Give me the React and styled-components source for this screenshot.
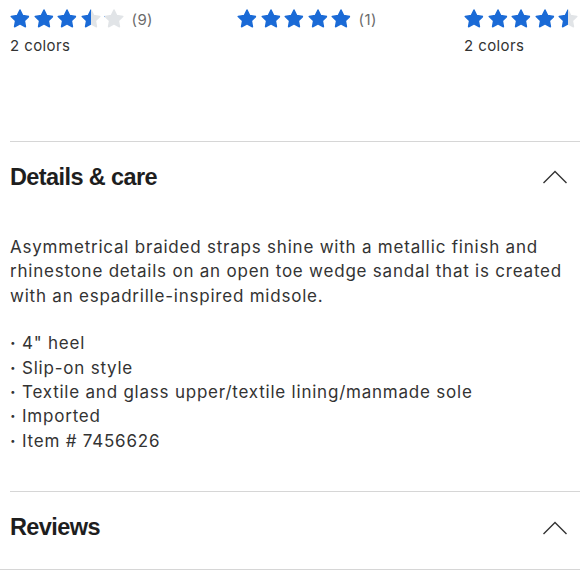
import React from 'react';
import styled, { createGlobalStyle } from 'styled-components';

const Global = createGlobalStyle`
    html, body {
        margin: 0;
        padding: 0;
        background: #fff;
        overflow: hidden;
    }
    body {
        font-family: "Inter", "Liberation Sans", sans-serif;
        color: #333;
    }
`

const Page = styled.div`
    width: 580px;
    height: 580px;
    overflow: hidden;
`

const Products = styled.div`
    display: grid;
    grid-template-columns: repeat(3, 227px);
    padding: 8px 0 0 9px;
    height: 133px;
`

const Product = styled.div`
    display: flex;
    flex-direction: column;
    gap: 6px;
`

const RatingRow = styled.div`
    display: flex;
    align-items: center;
    gap: 1.5px;
    height: 22px;
`

const Count = styled.span`
    font-size: 15px;
    color: #6b6b6b;
    margin-left: 5px;
    letter-spacing: 0.4px;
`

const Colors = styled.div`
    font-size: 15px;
    letter-spacing: 0.4px;
    color: #333;
    padding-left: 1px;
`

const Section = styled.section`
    border-top: 1px solid #d6d6d6;
    margin-left: 10px;
`

const Header = styled.div`
    display: flex;
    align-items: center;
    justify-content: space-between;
    height: ${p => p.$tall ? 71 : 70}px;
    padding-right: 12px;
    padding-bottom: ${p => p.$tall ? 6 : 0}px;
`

const Title = styled.h2`
    margin: 0;
    font-family: "Liberation Sans", Arial, sans-serif;
    font-weight: 700;
    font-size: 23.5px;
    letter-spacing: -0.6px;
    color: #1e1e1e;
`

const Body = styled.div`
    padding: 23px 0 38px;
    font-size: 17px;
    line-height: 24.4px;
    letter-spacing: 0.78px;
    color: #333;
`

const Paragraph = styled.p`
    margin: 0 0 23px;
`

const List = styled.ul`
    list-style: none;
    margin: 0;
    padding: 0;
`

const Item = styled.li`
    &::before {
        content: "·";
        display: inline-block;
        width: 12px;
        font-weight: 700;
    }
`

const BottomRule = styled.div`
    border-top: 1px solid #d6d6d6;
`

const STAR = "M12 2.2l2.95 6.05 6.65.95-4.82 4.65 1.15 6.6L12 17.3l-5.93 3.15 1.15-6.6L2.4 9.2l6.65-.95z";

function Star({ fill, id }) {
    const pct = Math.round(fill * 100);
    return (
        <svg width="22" height="22" viewBox="0 0 24 24">
            <defs>
                <linearGradient id={id}>
                    <stop offset={`${pct}%`} stopColor="#1a6ad6" />
                    <stop offset={`${pct}%`} stopColor="#e1e4e7" />
                </linearGradient>
            </defs>
            <path d={STAR} fill={`url(#${id})`} stroke={`url(#${id})`} strokeWidth="1.6" strokeLinejoin="round" />
        </svg>
    );
}

function Rating({ value, count, id }) {
    return (
        <RatingRow>
            {[0, 1, 2, 3, 4].map(i => (
                <Star key={i} id={`${id}-${i}`} fill={Math.max(0, Math.min(1, value - i))} />
            ))}
            {count && <Count>({count})</Count>}
        </RatingRow>
    );
}

function Chevron() {
    return (
        <svg width="26" height="16" viewBox="0 0 26 16" fill="none" stroke="#333" strokeWidth="1.4">
            <path d="M1.5 14L13 2.5 24.5 14" />
        </svg>
    );
}

export default function App() {
    return (
        <Page>
            <Global />
            <Products>
                <Product>
                    <Rating id="a" value={3.5} count="9" />
                    <Colors>2 colors</Colors>
                </Product>
                <Product>
                    <Rating id="b" value={5} count="1" />
                </Product>
                <Product>
                    <Rating id="c" value={4.5} />
                    <Colors>2 colors</Colors>
                </Product>
            </Products>
            <Section>
                <Header>
                    <Title>Details &amp; care</Title>
                    <Chevron />
                </Header>
                <Body>
                    <Paragraph>
                        Asymmetrical braided straps shine with a metallic finish and rhinestone details on an open toe wedge sandal that is created with an espadrille-inspired midsole.
                    </Paragraph>
                    <List>
                        <Item>4" heel</Item>
                        <Item>Slip-on style</Item>
                        <Item>Textile and glass upper/textile lining/manmade sole</Item>
                        <Item>Imported</Item>
                        <Item>Item # 7456626</Item>
                    </List>
                </Body>
            </Section>
            <Section>
                <Header $tall>
                    <Title>Reviews</Title>
                    <Chevron />
                </Header>
            </Section>
            <BottomRule />
        </Page>
    );
}
